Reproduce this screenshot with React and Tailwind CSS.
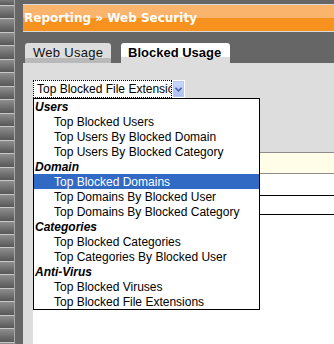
import React from "react";

const groups = [
  { title: "Users", items: ["Top Blocked Users", "Top Users By Blocked Domain", "Top Users By Blocked Category"] },
  { title: "Domain", items: ["Top Blocked Domains", "Top Domains By Blocked User", "Top Domains By Blocked Category"] },
  { title: "Categories", items: ["Top Blocked Categories", "Top Categories By Blocked User"] },
  { title: "Anti-Virus", items: ["Top Blocked Viruses", "Top Blocked File Extensions"] },
];

const tiles = Array.from({ length: 26 }, (_, i) =>
  Math.round(5 + 13.47 * (i + 1)) - Math.round(5 + 13.47 * i)
);

const App = () => {
  return (
    <div className="flex w-[334px] h-[344px] overflow-hidden font-['Liberation_Sans',Arial,sans-serif]">
      {/* left strip */}
      <div className="flex w-[23px] shrink-0">
        <div className="flex flex-col w-[14px]">
          <div className="h-[5px] shrink-0 bg-linear-to-b from-[#7a7a7a] to-[#5a5a5a]" />
          {tiles.map((h, i) => (
            <div
              key={i}
              className={`${h === 13 ? "h-[13px]" : "h-[14px]"} shrink-0 border-t border-[#c8c8c8] bg-linear-to-b from-[#8e8e8e] to-[#575757]`}
            />
          ))}
        </div>
        <div className="w-px bg-[#a8a8a8]" />
        <div className="flex-1 bg-[#666666]" />
      </div>

      {/* main */}
      <div className="flex-1 flex flex-col bg-[#666666]">
        <div className="mt-[4px] h-[28px] border-y border-[#d9d9d9] bg-[linear-gradient(#fbb46b_0,#fbb46b_13px,#f7921f_13px)] flex items-center pl-[1px]">
          <span className="text-white font-bold text-[12px] font-['DejaVu_Sans',Verdana,sans-serif] leading-none">
            Reporting » Web Security
          </span>
        </div>

        {/* tabs */}
        <div className="flex items-end gap-[10px] pl-[2px] mt-[11px] h-[20px]">
          <div className="w-[86px] h-[20px] rounded-t-[3px] bg-[linear-gradient(#dddddd_0,#dddddd_15px,#b9b9b9_15px)] flex items-start pl-[8px] pt-[3px]">
            <span className="text-[13px] leading-none tracking-[0.3px] text-[#111]">Web Usage</span>
          </div>
          <div className="w-[109px] h-[20px] rounded-t-[3px] bg-[linear-gradient(#ffffff_0,#ffffff_14px,#dddddd_14px)] flex items-start pl-[7px] pt-[3px]">
            <span className="text-[13px] leading-none font-bold text-black">Blocked Usage</span>
          </div>
        </div>

        {/* panel */}
        <div className="relative flex-1 flex flex-col bg-[#dddddd] pl-[10px]">
          <div className="mt-[17px] flex w-[152px] h-[18px] bg-white">
            <div className="flex-1 flex items-center border border-dotted border-black pl-[3px] overflow-hidden whitespace-nowrap">
              <span className="text-[12px] leading-none text-black">Top Blocked File Extensions</span>
            </div>
            <div className="ml-[1px] w-[11px] h-[16px] mt-[1px] mr-[1px] flex items-center justify-center bg-linear-to-b from-[#cad8fd] to-[#aebff0] border border-[#b7c8f3]">
              <svg width="7" height="5" viewBox="0 0 7 5">
                <path d="M0.5 0.8 L3.5 3.8 L6.5 0.8" fill="none" stroke="#4a62b0" strokeWidth="1.6" />
              </svg>
            </div>
          </div>

          {/* content under the list */}
          <div className="mt-[54px] flex-1 flex flex-col bg-white">
            <div className="h-[22px] border-y border-[#8c8c8c] bg-[#fffde8]" />
            <div className="h-[22px] border-b border-black" />
            <div className="h-[19px] border-b border-black" />
          </div>

          {/* open dropdown list */}
          <div className="absolute left-[10px] top-[35px] w-[227px] h-[212px] border border-black bg-white flex flex-col">
            {groups.map((g) => (
              <React.Fragment key={g.title}>
                <div className="h-[15px] flex items-center pl-[1px] text-[12px] font-bold italic text-black leading-none">
                  {g.title}
                </div>
                {g.items.map((it) => (
                  <div
                    key={it}
                    className={`h-[15px] flex items-center pl-[20px] text-[12px] leading-none whitespace-nowrap ${
                      it === "Top Blocked Domains" ? "bg-[#316ac5] text-white" : "text-black"
                    }`}
                  >
                    {it}
                  </div>
                ))}
              </React.Fragment>
            ))}
          </div>
        </div>
      </div>
    </div>
  );
};

export default App;
